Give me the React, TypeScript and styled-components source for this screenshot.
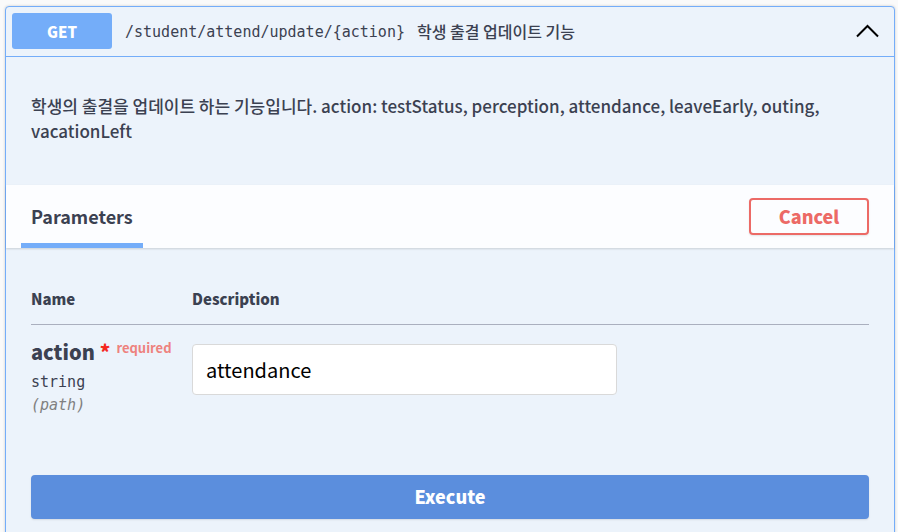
import { useState } from "react";
import styled, { createGlobalStyle } from "styled-components";

const sans = `"Noto Sans CJK KR", "Noto Sans", sans-serif`;
const mono = `"DejaVu Sans Mono", "Liberation Mono", monospace`;
const ink = "#3b4151";
const blue = "#74adf9";

const GlobalStyle = createGlobalStyle`
  *, *::before, *::after { box-sizing: border-box; }
  body {
    margin: 0;
    background: #fafafa;
    color: ${ink};
    font-family: ${sans};
    overflow-x: hidden;
  }
`;

const Page = styled.main`
  padding: 6px 3px 0 5px;
`;

const Operation = styled.section`
  border: 1px solid ${blue};
  border-radius: 4px;
  background: #ecf3fb;
  box-shadow: 0 0 3px rgba(0, 0, 0, 0.19);
  padding-bottom: 26px;
`;

const Summary = styled.button`
  display: flex;
  align-items: center;
  width: 100%;
  height: 50px;
  padding: 0 15px 2px 6px;
  border: 0;
  border-bottom: 1px solid ${blue};
  background: none;
  color: ${ink};
  font-family: ${sans};
  text-align: left;
  cursor: pointer;
`;

const Method = styled.span`
  width: 100px;
  height: 36px;
  border-radius: 3px;
  background: ${blue};
  color: #fff;
  font-size: 15px;
  font-weight: 900;
  line-height: 38px;
  text-align: center;
`;

const Path = styled.span`
  padding: 2px 12px 0 13px;
  font-family: ${mono};
  font-size: 15px;
  line-height: 20px;
`;

const SummaryText = styled.span`
  flex: 1;
  font-size: 16px;
  font-weight: 500;
  line-height: 24px;
`;

const Description = styled.p`
  margin: 0;
  padding: 36px 25px 42px;
  font-size: 17px;
  font-weight: 500;
  line-height: 25px;
`;

const TabBar = styled.header`
  display: flex;
  align-items: center;
  justify-content: space-between;
  height: 63px;
  padding: 0 25px 0 15px;
  background: #fcfdff;
  box-shadow: 0 1px 2px rgba(0, 0, 0, 0.15);
`;

const Tab = styled.h4`
  align-self: stretch;
  margin: 0;
  padding: 0 10px;
  border-bottom: 5px solid ${blue};
  font-size: 18px;
  font-weight: 700;
  line-height: 62px;
`;

const Button = styled.button<{ $variant: "outline" | "solid" }>`
  border-radius: 4px;
  border: 2px solid ${({ $variant }) => ($variant === "outline" ? "#ec6a66" : "#5b8edd")};
  background: ${({ $variant }) => ($variant === "outline" ? "transparent" : "#5b8edd")};
  color: ${({ $variant }) => ($variant === "outline" ? "#ec6a66" : "#fff")};
  width: ${({ $variant }) => ($variant === "outline" ? "120px" : "100%")};
  height: ${({ $variant }) => ($variant === "outline" ? "37px" : "44px")};
  padding: 0 0 2px;
  box-shadow: 0 1px 2px rgba(0, 0, 0, 0.1);
  font-family: ${sans};
  font-size: 18px;
  font-weight: 900;
  line-height: 24px;
  cursor: pointer;
`;

const Parameters = styled.div`
  padding: 39px 25px 58px;
`;

const Table = styled.table`
  width: 100%;
  border-collapse: collapse;
`;

const HeadCell = styled.th<{ $name?: boolean }>`
  width: ${({ $name }) => ($name ? "161px" : "auto")};
  padding: 0 0 13px;
  border-bottom: 1px solid #aaafbe;
  font-size: 15px;
  font-weight: 900;
  line-height: 24px;
  text-align: left;
`;

const Cell = styled.td`
  padding: 13px 0 0;
  vertical-align: top;
`;

const Name = styled.label`
  display: flex;
  align-items: flex-start;
  margin-bottom: 5px;
  font-size: 20px;
  font-weight: 900;
  line-height: 28px;
  white-space: nowrap;
`;

const Star = styled.span`
  padding: 0 6px 0 5px;
  color: #f5281e;
`;

const Required = styled.span`
  color: #ee827e;
  font-size: 13px;
  font-weight: 700;
  line-height: 20px;
`;

const Type = styled.div<{ $location?: boolean }>`
  color: ${({ $location }) => ($location ? "#808080" : ink)};
  font-family: ${mono};
  font-size: 15px;
  font-style: ${({ $location }) => ($location ? "italic" : "normal")};
  line-height: 23px;
`;

const TextInput = styled.input`
  display: block;
  width: 100%;
  max-width: 425px;
  height: 51px;
  margin-top: 6px;
  padding: 0 13px;
  border: 1px solid #d9d9d9;
  border-radius: 4px;
  background: #fff;
  color: #000;
  font-family: ${sans};
  font-size: 20px;
`;

const Actions = styled.div`
  padding: 0 25px;
`;

export default function App() {
  const [open, setOpen] = useState(true);
  const [action, setAction] = useState("attendance");
  return (
    <>
      <GlobalStyle />
      <Page>
        <Operation>
          <Summary type="button" aria-expanded={open} onClick={() => setOpen(!open)}>
            <Method>GET</Method>
            <Path>/student/attend/update/&#123;action&#125;</Path>
            <SummaryText>학생 출결 업데이트 기능</SummaryText>
            <svg width="24" height="16" viewBox="0 0 24 16" fill="none" stroke="#000" strokeWidth="2" aria-hidden="true">
              <path d="M2 13.5 12.5 3 23 13.5" />
            </svg>
          </Summary>
          {open && (
            <>
              <Description>
                학생의 출결을 업데이트 하는 기능입니다. action: testStatus, perception, attendance, leaveEarly, outing,
                vacationLeft
              </Description>
              <TabBar>
                <Tab>Parameters</Tab>
                <Button type="button" $variant="outline">Cancel</Button>
              </TabBar>
              <Parameters>
                <Table>
                  <thead>
                    <tr>
                      <HeadCell scope="col" $name>Name</HeadCell>
                      <HeadCell scope="col">Description</HeadCell>
                    </tr>
                  </thead>
                  <tbody>
                    <tr>
                      <Cell>
                        <Name htmlFor="action">
                          action<Star>*</Star>
                          <Required>required</Required>
                        </Name>
                        <Type>string</Type>
                        <Type $location>(path)</Type>
                      </Cell>
                      <Cell>
                        <TextInput id="action" type="text" value={action} onChange={(e) => setAction(e.target.value)} />
                      </Cell>
                    </tr>
                  </tbody>
                </Table>
              </Parameters>
              <Actions>
                <Button type="button" $variant="solid">Execute</Button>
              </Actions>
            </>
          )}
        </Operation>
      </Page>
    </>
  );
}
